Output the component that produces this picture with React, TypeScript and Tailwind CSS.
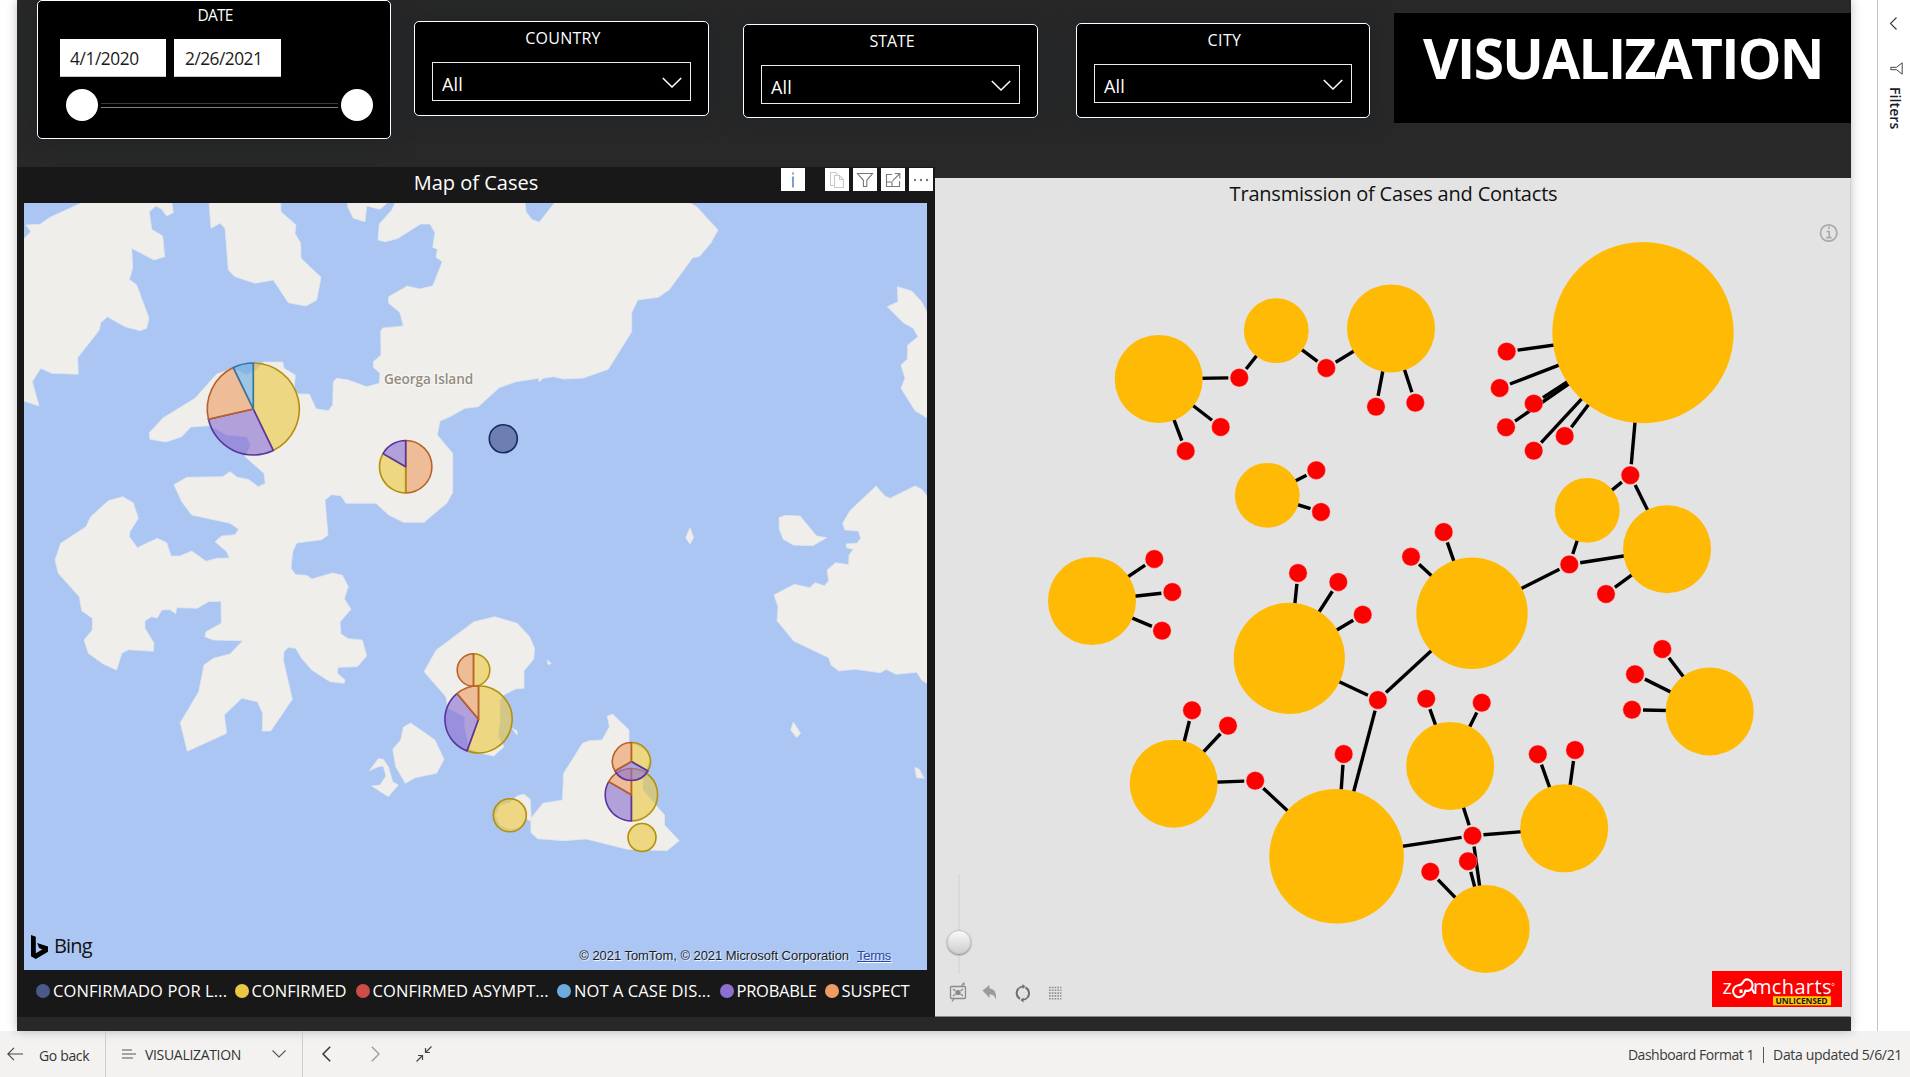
import React from "react";

/* ---------- map geometry: coastline points, scaled to screen units ---------- */

function coast(points: string, ox: number, oy: number, sx = 3, sy = 3): string {
  return points
    .trim()
    .split(/\s+/)
    .map((p) => {
      const [x, y] = p.split(",").map(Number);
      return `${(ox + x / sx).toFixed(1)},${(oy + y / sy).toFixed(1)}`;
    })
    .join(" ");
}

const NW = (p: string) => coast(p, 0, 190);
const NE = (p: string) => coast(p, 470, 160);
const SW = (p: string) => coast(p, 0, 500);
const SE = (p: string) => coast(p, 400, 560, 2.904, 3);

const MAIN_ISLAND = [
  NW(`1185,39 1175,60 1138,102 1134,150 1155,155 1192,146 1262,102 1290,102 1305,128 1298,172 1312,178 1308,202 1327,215
  1298,288 1258,297 1222,288 1166,320 1166,340 1200,368 1210,408 1148,414 1142,422 1143,495 1120,515 1120,532 1140,550
  1138,580 1100,590 1045,570 1010,565 1000,575 998,645 985,662 948,656 928,612 895,612 882,600 886,555 852,535 848,516
  790,516 770,540 740,555 700,535 650,552 585,625 490,683 448,728 450,748 498,756 545,740 572,711 630,707 680,735 740,740 752,765
  735,800 792,850 796,880 775,890 745,868 712,862 690,845 668,860 560,862 522,884 545,935 575,975 690,1000 716,1018
  705,1034 665,1038 645,1055 680,1085 688,1104 650,1105 618,1114 575,1083 540,1098 513,1098 500,1058 472,1045 412,1073
  388,1040 390,1025 415,985 400,938 368,920 325,932 272,980 258,1010 182,1060 165,1110 175,1150`),
  SW(`238,290 245,332 277,355 277,390 252,420 265,460 310,492 350,510 365,460 385,449 460,454 462,430 435,385 435,362
  455,350 472,354 485,330 510,329 527,341 530,323 592,325 625,305 663,304 664,370 618,395 615,410 640,420 728,422 690,462
  640,475 612,495 596,575 541,668 562,754 680,700 673,645 725,595 772,605 788,640 787,693 812,693 877,598 850,480 852,455
  865,442 887,445 905,475 935,510 990,545 1033,550 1035,540 1012,520 1014,502 1072,500 1100,468 1087,420 1045,416 1023,402
  1020,366 1053,328 1033,296 1045,260 1027,226 998,219 935,237 920,226 887,224 873,205 878,155 890,129 965,119 984,105`),
  NW(`975,930 995,914 1022,917 1038,940 1128,940 1165,974 1210,997 1272,997 1340,940 1358,908 1358,790 1312,735 1320,693
  1350,680 1395,655`),
  NE(`0,743 25,740 88,683 138,665 205,655 208,665 220,655 250,650 280,657 340,654 415,628 485,515 485,458 503,420 565,412
  597,390 668,293 688,290 722,250 744,210 680,140 655,126 255,126 208,187 185,178 168,155 165,126`),
].join(" ");

const LANDS = [
  MAIN_ISLAND,
  NW("1043,50 1060,85 1095,95 1100,48 1140,58 1165,36 1043,36"),
  NW(`70,148 92,125 78,105 120,103 150,82 250,36 515,36 520,68 500,78 485,58 468,48 448,65 455,118 488,138 494,200 462,210
  395,175 398,235 388,268 410,285 447,385 440,415 420,422 375,410 322,380 302,398 298,420 233,503 235,553 155,550 122,535
  97,575 117,648 70,632`),
  NW(`627,36 633,115 660,100 675,115 685,240 705,260 765,280 820,270 865,338 918,348 950,330 963,262 903,205 902,160
  885,130 888,105 843,65 842,36`),
  NE(`1282,380 1325,393 1355,425 1373,460 1373,775 1335,752 1293,685 1305,655 1293,615 1312,598 1313,555 1344,530 1330,505
  1300,488 1252,440 1284,425`),
  NE(`1373,1010 1355,988 1335,978 1260,1015 1245,1008 1218,978 1140,1052 1118,1090 1125,1110 1165,1113 1172,1135 1160,1150
  1128,1152 1130,1163 1150,1168 1137,1185 1136,1214 1097,1208 1071,1230 1076,1262 1063,1277 1035,1268 1019,1283 973,1273
  912,1305 924,1340 921,1382 971,1443 1076,1493 1083,1515 1107,1533 1154,1528 1231,1538 1249,1528 1278,1543 1340,1537
  1355,1560 1373,1572`),
  NE("927,1073 945,1066 990,1068 1040,1128 1070,1133 1028,1157 970,1155 940,1138 928,1108"),
  NE("660,1103 671,1133 660,1152 647,1133"),
  SE(`275,170 340,190 375,228 391,265 388,298 360,332 360,385 335,387 300,406 290,420 290,480 285,530 302,560 272,588
  230,578 200,565 188,500 188,470 140,445 133,410 70,335 105,270 215,185`),
  SW("1232,669 1305,720 1332,778 1310,820 1245,833 1216,850 1187,800 1178,748 1202,720 1210,682"),
  SW("1108,812 1135,776 1150,778 1165,800 1178,845 1195,855 1165,890 1115,858 1140,855 1158,828 1150,798 1135,800"),
  SE(`602,468 618,463 665,510 665,545 720,575 725,600 705,650 705,690 768,765 768,795 811,842 775,872 660,868 540,837
  475,842 400,836 380,818 380,775 415,730 472,720 475,640 530,550 550,542 587,540 608,500`),
  SE("340,708 360,702 378,718 382,785 365,775 350,800 320,808 290,796 278,766 290,738 318,728"),
  SE("427,300 440,310 430,314"),
  SE("325,505 340,512 340,525"),
  SE("1142,486 1163,520 1152,533 1135,510"),
  SE("1495,622 1508,628 1522,655 1500,653"),
];

/* ---------- pies ---------- */

const CAT = {
  navy: { fill: "#47538a", stroke: "#18285e" },
  yellow: { fill: "#ebc844", stroke: "#b3900c" },
  blue: { fill: "#6cadde", stroke: "#3378ac" },
  purple: { fill: "#8d6fd1", stroke: "#5a35a0" },
  orange: { fill: "#ee9c64", stroke: "#b8622a" },
};
type Cat = keyof typeof CAT;

interface PieSpec {
  x: number;
  y: number;
  r: number;
  parts: [Cat, number][];
}

const PIES: PieSpec[] = [
  { x: 253.3, y: 409, r: 46, parts: [["yellow", 6], ["purple", 4], ["orange", 3], ["blue", 1]] },
  { x: 405.7, y: 466.7, r: 26.2, parts: [["orange", 3], ["yellow", 2], ["purple", 1]] },
  { x: 503.3, y: 438.7, r: 14, parts: [["navy", 1]] },
  { x: 473.5, y: 670, r: 16.3, parts: [["yellow", 1], ["orange", 1]] },
  { x: 478.5, y: 719.3, r: 33.6, parts: [["yellow", 5], ["purple", 3], ["orange", 1]] },
  { x: 631.4, y: 794.7, r: 26.2, parts: [["yellow", 3], ["purple", 2], ["orange", 1]] },
  { x: 631.4, y: 761.5, r: 19, parts: [["yellow", 1], ["purple", 1], ["orange", 1]] },
  { x: 509.8, y: 815.3, r: 16.5, parts: [["yellow", 1]] },
  { x: 642, y: 837.5, r: 14, parts: [["yellow", 1]] },
];

function Pie({ x, y, r, parts }: PieSpec) {
  const total = parts.reduce((s, p) => s + p[1], 0);
  if (parts.length === 1) {
    const c = CAT[parts[0][0]];
    return <circle cx={x} cy={y} r={r} fill={c.fill} fillOpacity={0.62} stroke={c.stroke} strokeWidth={1.6} />;
  }
  let acc = 0;
  return (
    <g>
      {parts.map(([cat, n], i) => {
        const a0 = (acc / total) * Math.PI * 2;
        acc += n;
        const a1 = (acc / total) * Math.PI * 2;
        const c = CAT[cat];
        const d = `M${x} ${y}L${x + r * Math.sin(a0)} ${y - r * Math.cos(a0)}A${r} ${r} 0 ${
          a1 - a0 > Math.PI ? 1 : 0
        } 1 ${x + r * Math.sin(a1)} ${y - r * Math.cos(a1)}Z`;
        return (
          <path key={i} d={d} fill={c.fill} fillOpacity={0.62} stroke={c.stroke} strokeWidth={1.6} strokeLinejoin="round" />
        );
      })}
    </g>
  );
}

/* ---------- transmission network ---------- */

const CASES: Record<string, [number, number, number]> = {
  a: [1158.7, 379, 44],
  b: [1276.3, 330.7, 32.4],
  c: [1391, 328.4, 44],
  d: [1267.3, 495.3, 32.4],
  e: [1092, 601, 44],
  f: [1289.3, 658.3, 55.6],
  g: [1643, 332.6, 90.7],
  h: [1587.3, 510.3, 32.4],
  i: [1667, 549.2, 44],
  j: [1472, 613.3, 55.7],
  k: [1709.7, 711.4, 44],
  l: [1173.7, 783.7, 44],
  m: [1336.6, 856.3, 67.3],
  n: [1450.2, 766, 44],
  o: [1564.2, 828.3, 44],
  p: [1485.7, 929, 44],
};

const CONTACTS: [number, number, string][] = [
  [1239.3, 377.7, "ab"], [1326.3, 368, "bc"], [1376, 406.7, "c"], [1415.3, 402.7, "c"],
  [1220.7, 427, "a"], [1185.7, 451, "a"], [1316.3, 470.3, "d"], [1321, 512, "d"],
  [1154.3, 559, "e"], [1172.3, 592, "e"], [1162, 630.7, "e"], [1298, 573, "f"],
  [1338.3, 582, "f"], [1362.7, 614.7, "f"], [1506.7, 351.6, "g"], [1499.7, 388, "g"],
  [1506, 427.3, "g"], [1533.7, 403.6, "g"], [1533.7, 450.7, "g"], [1564.7, 436, "g"],
  [1630.3, 475.2, "ghi"], [1569.3, 564.4, "hij"], [1606, 594, "i"], [1443.7, 532, "j"],
  [1411, 556.8, "j"], [1662.3, 649, "k"], [1635, 674.2, "k"], [1632, 709.7, "k"],
  [1192, 710.3, "l"], [1228, 725.7, "l"], [1255.2, 780.7, "lm"], [1343.7, 754, "m"],
  [1377.9, 700, "fjm"], [1426.2, 698.7, "n"], [1481.7, 702.7, "n"], [1472.5, 835.7, "mnop"],
  [1468, 861.3, "p"], [1430.3, 871.7, "p"], [1537.8, 754.3, "o"], [1575, 750, "o"],
];

function Network() {
  return (
    <svg className="block w-[916px]" height={774} viewBox="935 208 916 774">
      {CONTACTS.flatMap(([x, y, links]) =>
        links.split("").map((k) => {
          const [cx, cy] = CASES[k];
          const d = Math.hypot(cx - x, cy - y);
          return (
            <line
              key={`${x}-${y}-${k}`}
              x1={x + ((cx - x) / d) * 11}
              y1={y + ((cy - y) / d) * 11}
              x2={cx}
              y2={cy}
              stroke="#000"
              strokeWidth={3.4}
            />
          );
        }),
      )}
      {Object.entries(CASES).map(([k, [x, y, r]]) => (
        <circle key={k} cx={x} cy={y} r={r} fill="#ffba05" />
      ))}
      {CONTACTS.map(([x, y]) => (
        <circle key={`${x}-${y}`} cx={x} cy={y} r={9.2} fill="#ff0000" stroke="#f3c9c9" strokeWidth={0.4} />
      ))}
      <g fill="none" stroke="#a9a9a9" strokeWidth={1.7}>
        <circle cx={1828.7} cy={233} r={8.2} />
        <path d="M1826.600 231.500h2.600v6M1826.200 237.600h5.400" strokeWidth={1.600} />
        <path d="M1828 227.800h2" strokeWidth={2} />
      </g>
    </svg>
  );
}

/* ---------- top bar ---------- */

const CARD = "shrink-0 rounded-[5px] border border-white bg-black shadow-[0_0_18px_4px_rgba(32,35,41,0.9)]";

function DateCard() {
  return (
    <div className={`${CARD} ml-5 h-[139px] w-[354px]`}>
      <h2 className="pl-[2px] text-center text-[15.5px] leading-[29px] tracking-[-0.8px] text-white">DATE</h2>
      <div className="mt-[9px] ml-[22px] flex gap-2 text-[17.3px] text-[#1b1b1b]">
        <div className="h-[38px] w-[106px] border-b border-[#c8c8c8] bg-white pl-[10px] leading-[39px] tracking-[-0.4px]">4/1/2020</div>
        <div className="h-[38px] w-[107px] border-b border-[#c8c8c8] bg-white pl-[11px] leading-[39px] tracking-[-0.5px]">2/26/2021</div>
      </div>
      <div className="mt-3 ml-7 flex w-[307px] items-center">
        <span className="h-8 w-8 rounded-full bg-white" />
        <span className="mx-[3px] h-[5px] flex-1 border-t border-b border-t-[#3a3a3a] border-b-[#808080]" />
        <span className="h-8 w-8 rounded-full bg-white" />
      </div>
    </div>
  );
}

function SlicerCard({ title, className, titleClass }: { title: string; className: string; titleClass: string }) {
  return (
    <div className={`${CARD} ${className}`}>
      <h2 className={`pl-[3px] text-center text-[16px] leading-[32px] text-white ${titleClass}`}>{title}</h2>
      <div className="mx-[17px] mt-2 flex h-[39px] items-center justify-between border border-[#ececec] pr-2 pl-[9px]">
        <span className="pt-1 text-[18px] leading-[24px] tracking-[0.1px] text-white">All</span>
        <svg width="20" height="11" viewBox="0 0 20 11" className="mt-[2px]" fill="none" stroke="#fff" strokeWidth="1.5">
          <path d="M.8 1l9.200 9 9.200-9" />
        </svg>
      </div>
    </div>
  );
}

/* ---------- map panel ---------- */

function HeaderButton({ children, className = "" }: { children: React.ReactNode; className?: string }) {
  return (
    <span className={`flex h-[23px] w-6 items-center justify-center bg-white ${className}`}>
      <svg width="18" height="18" viewBox="0 0 18 18" fill="none" stroke="#777" strokeWidth="1.1">
        {children}
      </svg>
    </span>
  );
}

const LEGEND: [string, string, string, string][] = [
  ["CONFIRMADO POR L...", "bg-[#4a588a]", "w-[198.6px]", "tracking-[0.1px]"],
  ["CONFIRMED", "bg-[#ebc844]", "w-[121px]", "tracking-[0px]"],
  ["CONFIRMED ASYMPT...", "bg-[#cd4c46]", "w-[201.5px]", "tracking-[0.06px]"],
  ["NOT A CASE DIS...", "bg-[#6cadde]", "w-[162.5px]", "tracking-[0.07px]"],
  ["PROBABLE", "bg-[#8d6fd1]", "w-[105px]", "tracking-[-0.3px]"],
  ["SUSPECT", "bg-[#ee9c64]", "w-[90px]", "tracking-[-0.1px]"],
];

function MapPanel() {
  return (
    <section className="relative h-[850px] w-[918px] shrink-0 bg-[#181818]">
      <h2 className="h-9 text-center text-[20px] leading-[31px] text-white">Map of Cases</h2>
      <div className="absolute top-px left-[764px] flex gap-1">
        <HeaderButton className="mr-4">
          <path d="M9 5.500v11M9 1.500v2" stroke="#7ba0cc" strokeWidth="2" />
        </HeaderButton>
        <HeaderButton>
          <g stroke="#c9c9c9">
            <path d="M6.500 14.500H2.500v-13h5l2 2" />
            <path d="M6.500 4.500h5l4 4v8h-9zM11.500 4.500v4h4" />
          </g>
        </HeaderButton>
        <HeaderButton>
          <path d="M1.500 2.500h15l-5.700 6.800v6.200H7.400V9.300z" />
        </HeaderButton>
        <HeaderButton>
          <path d="M8 3.500H2.500v12h13V10M2.500 11h5.500v4.500M8.500 9.800l7-7M10.800 2.500h5v5" />
        </HeaderButton>
        <HeaderButton>
          <g fill="#777" stroke="none">
            <circle cx="3" cy="9" r="1.200" />
            <circle cx="9" cy="9" r="1.200" />
            <circle cx="15" cy="9" r="1.200" />
          </g>
        </HeaderButton>
      </div>
      <div className="relative ml-[7px] h-[767px] w-[903px] overflow-hidden bg-[#abc6f2]">
        <svg className="block" width={903} height={767} viewBox="24 203 903 767">
          {LANDS.map((pts, i) => (
            <polygon key={i} points={pts} fill="#f0eeea" stroke="#dfe6ee" strokeWidth={0.8} strokeLinejoin="round" />
          ))}
          <text x={384} y={384} fontSize={13.600} fontWeight={600} fill="#938c82" stroke="#f7f6f3" strokeWidth={2} paintOrder="stroke" letterSpacing={-0.1}>
            Georga Island
          </text>
          {PIES.map((p, i) => (
            <Pie key={i} {...p} />
          ))}
        </svg>
        <div className="absolute bottom-[10px] left-[7px] flex items-center gap-[6px] text-[20px] leading-7 tracking-[-0.8px] text-[#111]">
          <svg width="17" height="24" viewBox="0 0 17 24" fill="#000">
            <path d="M0 0l4.800 1.700v16.500l6.500-3.800-3.200-1.500-2-5L17 11.600v5.200L4.800 24 0 21.300z" />
          </svg>
          <span className="-mt-[2px]">Bing</span>
        </div>
        <div className="absolute right-9 bottom-[5px] flex gap-2 font-['Liberation_Sans',Arial,sans-serif] text-[13px] leading-[18px] tracking-[-0.05px] text-[#1c1c1c] [text-shadow:1px_1px_1px_#fff]">
          <span>© 2021 TomTom, © 2021 Microsoft Corporation</span>
          <a className="tracking-[-0.28px] text-[#2a47a8] underline">Terms</a>
        </div>
      </div>
      <ul className="ml-[19px] flex h-[42px] items-center text-[16.5px] whitespace-nowrap text-white">
        {LEGEND.map(([label, dot, width, tracking]) => (
          <li key={label} className={`flex shrink-0 items-center gap-[3px] ${width} ${tracking}`}>
            <span className={`h-[14px] w-[14px] shrink-0 rounded-full ${dot}`} />
            {label}
          </li>
        ))}
      </ul>
    </section>
  );
}

/* ---------- network panel ---------- */

function NetworkTools() {
  return (
    <svg width="110" height="22" viewBox="948 982 110 22" className="overflow-visible" fill="none" stroke="#8a8a8a">
      <rect x="950.5" y="986.500" width="15" height="12" rx="1" strokeWidth="1.300" />
      <circle cx="958" cy="992.500" r="2.600" fill="#8a8a8a" stroke="none" />
      <path d="M953 989l2.500 2M963 989l-2.500 2M953 996l2.500-2M963 996l-2.500-2" strokeWidth="1.300" />
      <path d="M961 986.500l2.500-3.500M964 982.500v3M952 1001.500l2-3" strokeWidth="1.200" />
      <path d="M982.500 990.500l7-5.500v3.500c5 .5 7 4 6.500 11-1.500-4-3-5-6.500-5v3.500z" fill="#9b9b9b" stroke="none" />
      <path d="M1025.500 987.500a6.600 6.600 0 0 1 2 10M1020 998.800a6.600 6.600 0 0 1-1.500-10.300" stroke="#6e6e6e" strokeWidth="2" />
      <path d="M1018.500 988.500a6.600 6.600 0 0 1 5-2M1027.500 997.500a6.600 6.600 0 0 1-5 2.300" stroke="#6e6e6e" strokeWidth="1.600" />
      <path d="M1022.500 984l3 2.600-3 2.400zM1023.500 997.500l-3 2.400 3 2.600z" fill="#6e6e6e" stroke="none" />
      <path
        d="M1049 987.500h12.500M1049 990.300h12.500M1049 993.100h12.500M1049 995.900h12.500M1049 998.700h12.500"
        stroke="#8f8f8f"
        strokeWidth="1.600"
        strokeDasharray="1.700 1.100"
      />
    </svg>
  );
}

function ZoomChartsLogo() {
  return (
    <div className="relative h-9 w-[130px] bg-[#ff0000]">
      <svg width="130" height="36" viewBox="0 0 130 36" fontWeight={500}>
        <text x="10.500" y="23.300" fontSize="20" fill="#fff">z</text>
        <text x="41" y="23.300" fontSize="20" fill="#fff" letterSpacing="0.35">mcharts</text>
        <g fill="none" stroke="#fff" strokeWidth="2.100">
          <path d="M33 19.500a6 6 0 1 1-6.500-5.300c2.500 0 3.500-1.200 4.500-3 1.300-2.300 3.500-3.300 5.800-2.500 3.500 1.300 4.500 5 3 8.300-1.400 3-4.800 3.500-7.300 2.200" />
          <path d="M40 18l2.500 4.500" />
          <path d="M29 18.500v3.500" strokeWidth="3" />
        </g>
        <circle cx="121" cy="13.500" r="1.200" fill="none" stroke="#fff" strokeWidth=".6" />
        <rect x="61" y="25.300" width="58" height="9" fill="#ffcb05" />
        <text x="63.500" y="33" fontSize="8.500" fontWeight={700} fill="#1a1a1a" letterSpacing="-0.18">UNLICENSED</text>
        <path d="M107 14c-1 2-.5 4 2 5.500s3 4 .5 6" fill="none" stroke="#5b0000" strokeWidth="1.500" opacity=".6" />
      </svg>
    </div>
  );
}

function NetworkPanel() {
  return (
    <section className="relative mt-[11px] h-[839px] w-[916px] shrink-0 border-r border-b border-r-[#cfcfcf] border-b-[#8a8a8a] bg-[#e3e3e3]">
      <h2 className="h-[30px] pl-[2px] text-center text-[20px] leading-[31px] tracking-[-0.2px] text-[#111]">
        Transmission of Cases and Contacts
      </h2>
      <Network />
      <div className="absolute top-[696px] left-[23px] flex h-[100px] w-[2px] items-center justify-center bg-[#dadada]">
        <span className="mt-[36px] h-6 w-6 shrink-0 rounded-full border border-[#c4c4c4] bg-linear-to-b from-[#fafafa] to-[#cfcfcf] shadow-[0_1px_2px_rgba(0,0,0,0.45)]" />
      </div>
      <div className="absolute right-2 bottom-[9px] left-[13px] flex items-end justify-between">
        <div className="pb-[3px]">
          <NetworkTools />
        </div>
        <ZoomChartsLogo />
      </div>
    </section>
  );
}

/* ---------- side pane and footer ---------- */

function FiltersPane() {
  return (
    <aside className="flex h-[1031px] w-[33px] shrink-0 flex-col items-center border-l border-[#c3c3c3] bg-white pt-[17px]">
      <svg width="7" height="13" viewBox="0 0 7 13" className="mr-px" fill="none" stroke="#333" strokeWidth="1.100">
        <path d="M6.500.5l-6 6 6 6" />
      </svg>
      <svg width="13" height="13" viewBox="0 0 13 13" className="mt-[32px] ml-1" fill="none" stroke="#444" strokeWidth="1">
        <path d="M12.200.8v11.400L6.500 7.700H.8V5.300h5.700z" />
      </svg>
      <span className="mt-3 ml-px text-[14px] leading-[18px] font-semibold tracking-[0.1px] text-[#1b1b2b] [writing-mode:vertical-rl]">Filters</span>
    </aside>
  );
}

function Footer() {
  return (
    <footer className="flex h-[46px] items-stretch bg-[#f3f2f1] text-[14px] whitespace-nowrap text-[#333]">
      <div className="flex w-[106px] items-center gap-4 border-r border-[#d0cecc] pl-[7px]">
        <svg width="16" height="14" viewBox="0 0 16 14" fill="none" stroke="#444" strokeWidth="1.100">
          <path d="M16 7H1M7 .8L.8 7 7 13.200" />
        </svg>
        <span className="pt-[3px] tracking-[-0.35px]">Go back</span>
      </div>
      <div className="flex w-[197px] items-center border-r border-[#d0cecc] pl-4">
        <svg width="14" height="10" viewBox="0 0 14 10" fill="none" stroke="#555" strokeWidth="1.200">
          <path d="M0 1h10M0 5h14M0 9h11" />
        </svg>
        <span className="ml-[9px] w-[127px] pt-px tracking-[-0.32px]">VISUALIZATION</span>
        <svg width="14" height="8" viewBox="0 0 14 8" fill="none" stroke="#555" strokeWidth="1.100">
          <path d="M.5.5L7 7 13.500.5" />
        </svg>
      </div>
      <div className="flex items-center pl-[19px]">
        <svg width="9" height="16" viewBox="0 0 9 16" fill="none" stroke="#333" strokeWidth="1.500">
          <path d="M8.200.8L1 8l7.200 7.200" />
        </svg>
        <svg width="9" height="16" viewBox="0 0 9 16" className="ml-10" fill="none" stroke="#999" strokeWidth="1.300">
          <path d="M.8.8L8 8 .8 15.200" />
        </svg>
        <svg width="16" height="16" viewBox="0 0 16 16" className="ml-9" fill="none" stroke="#444" strokeWidth="1.200">
          <path d="M15.500.5L9.500 6.500M9.500 2v4.500H14M.5 15.500l6-6M2 9.500h4.500V14" />
        </svg>
      </div>
      <div className="ml-auto flex items-center pr-2 pt-px text-[#3a3a3a]">
        <span className="tracking-[-0.47px]">Dashboard Format 1</span>
        <span className="mx-[9px] h-4 w-px bg-[#555]" />
        <span className="tracking-[-0.33px]">Data updated 5/6/21</span>
      </div>
    </footer>
  );
}

export default function App() {
  return (
    <div className="h-[1077px] w-[1910px] overflow-hidden bg-white font-['Open_Sans','Noto_Sans',sans-serif]">
      <div className="flex h-[1031px] justify-between">
        <main className="ml-[17px] w-[1834px] shrink-0 bg-[#282828] shadow-[0_0_10px_rgba(0,0,0,0.25)]">
          <header className="flex h-[167px] items-start overflow-hidden">
            <DateCard />
            <SlicerCard title="COUNTRY" className="mt-[21px] ml-[23px] h-[95px] w-[295px]" titleClass="tracking-[0.25px]" />
            <SlicerCard title="STATE" className="mt-6 ml-[34px] h-[94px] w-[295px]" titleClass="tracking-[-0.05px]" />
            <SlicerCard title="CITY" className="mt-[23px] ml-[38px] h-[95px] w-[294px]" titleClass="tracking-[0.4px]" />
            <div className="mt-[13px] ml-6 h-[110px] w-[457px] shrink-0 bg-black pl-[29px]">
              <h1 className="text-[55px] leading-[90px] font-bold tracking-[-1.65px] text-white">VISUALIZATION</h1>
            </div>
          </header>
          <div className="flex">
            <MapPanel />
            <NetworkPanel />
          </div>
        </main>
        <FiltersPane />
      </div>
      <Footer />
    </div>
  );
}
